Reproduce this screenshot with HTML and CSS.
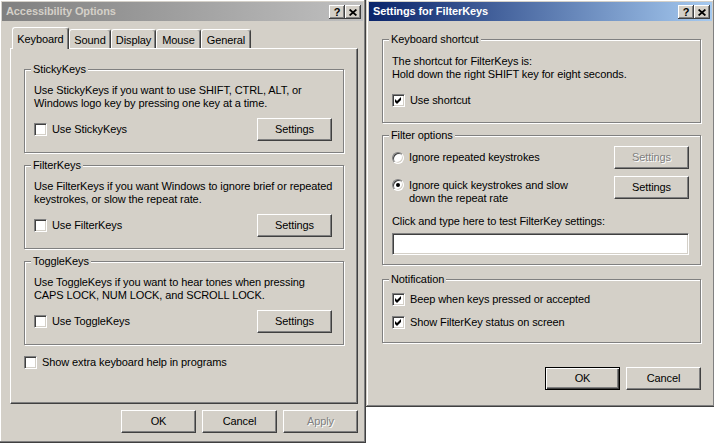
FILE: index.html
```html
<!DOCTYPE html>
<html lang="en">
<head>
    <meta charset="UTF-8">
    <title>Accessibility Options</title>
    <link rel="stylesheet" href="styles.css">
</head>
<body>
    <div class="desktop">
        <div class="window left inactive">
            <div class="titlebar">
                <span class="title">Accessibility Options</span>
                <span class="cap-btn">?</span>
                <span class="cap-btn"><svg width="8" height="7" viewBox="0 0 8 7"><path d="M0.6 0.5 L7.4 6.5 M7.4 0.5 L0.6 6.5" stroke="#000" stroke-width="1.7"/></svg></span>
            </div>

            <div class="tabs">
                <span class="tab active">Keyboard</span>
                <span class="tab">Sound</span>
                <span class="tab">Display</span>
                <span class="tab">Mouse</span>
                <span class="tab">General</span>
            </div>

            <div class="pane">
                <fieldset class="group">
                    <legend>StickyKeys</legend>
                    <div class="text">Use StickyKeys if you want to use SHIFT, CTRL, ALT, or<br>Windows logo key by pressing one key at a time.</div>
                    <div class="row">
                        <label class="opt"><span class="check"></span>Use StickyKeys</label>
                        <span class="btn">Settings</span>
                    </div>
                </fieldset>

                <fieldset class="group">
                    <legend>FilterKeys</legend>
                    <div class="text">Use FilterKeys if you want Windows to ignore brief or repeated<br>keystrokes, or slow the repeat rate.</div>
                    <div class="row">
                        <label class="opt"><span class="check"></span>Use FilterKeys</label>
                        <span class="btn">Settings</span>
                    </div>
                </fieldset>

                <fieldset class="group">
                    <legend>ToggleKeys</legend>
                    <div class="text">Use ToggleKeys if you want to hear tones when pressing<br>CAPS LOCK, NUM LOCK, and SCROLL LOCK.</div>
                    <div class="row">
                        <label class="opt"><span class="check"></span>Use ToggleKeys</label>
                        <span class="btn">Settings</span>
                    </div>
                </fieldset>

                <label class="opt extra"><span class="check"></span>Show extra keyboard help in programs</label>
            </div>

            <div class="buttons">
                <span class="btn">OK</span>
                <span class="btn">Cancel</span>
                <span class="btn disabled">Apply</span>
            </div>
        </div>

        <div class="window right active">
            <div class="titlebar">
                <span class="title">Settings for FilterKeys</span>
                <span class="cap-btn">?</span>
                <span class="cap-btn"><svg width="8" height="7" viewBox="0 0 8 7"><path d="M0.6 0.5 L7.4 6.5 M7.4 0.5 L0.6 6.5" stroke="#000" stroke-width="1.7"/></svg></span>
            </div>

            <div class="body">
                <fieldset class="group shortcut">
                    <legend>Keyboard shortcut</legend>
                    <div class="text">The shortcut for FilterKeys is:<br>Hold down the right SHIFT key for eight seconds.</div>
                    <label class="opt"><span class="check checked"><svg width="7" height="7" viewBox="0 0 7 7"><path d="M0 2 L2 4 L6 0 L6 3 L2 7 L0 5 Z" fill="#000"/></svg></span>Use shortcut</label>
                </fieldset>

                <fieldset class="group filter">
                    <legend>Filter options</legend>
                    <div class="row first">
                        <label class="opt"><span class="radio"></span>Ignore repeated keystrokes</label>
                        <span class="btn disabled">Settings</span>
                    </div>
                    <div class="row second">
                        <label class="opt top"><span class="radio selected"></span><span>Ignore quick keystrokes and slow<br>down the repeat rate</span></label>
                        <span class="btn">Settings</span>
                    </div>
                    <div class="test-label">Click and type here to test FilterKey settings:</div>
                    <div class="field"></div>
                </fieldset>

                <fieldset class="group notify">
                    <legend>Notification</legend>
                    <label class="opt"><span class="check checked"><svg width="7" height="7" viewBox="0 0 7 7"><path d="M0 2 L2 4 L6 0 L6 3 L2 7 L0 5 Z" fill="#000"/></svg></span>Beep when keys pressed or accepted</label>
                    <label class="opt"><span class="check checked"><svg width="7" height="7" viewBox="0 0 7 7"><path d="M0 2 L2 4 L6 0 L6 3 L2 7 L0 5 Z" fill="#000"/></svg></span>Show FilterKey status on screen</label>
                </fieldset>

                <div class="buttons">
                    <span class="btn default">OK</span>
                    <span class="btn">Cancel</span>
                </div>
            </div>
        </div>
    </div>
</body>
</html>
```

FILE: styles.css
```css
html, body {
    margin: 0;
    overflow: hidden;
}
body {
    background-color: #fff;
    font-family: "Liberation Sans", Arial, sans-serif;
    font-size: 11px;
    line-height: 13px;
    letter-spacing: -0.1px;
    color: #000;
}
.desktop {
    display: flex;
    align-items: flex-start;
    margin: -1px 0 0 -1px;
}
.window {
    flex: none;
    box-sizing: border-box;
    padding: 3px;
    background-color: #d4d0c8;
    box-shadow: inset -1px -1px #404040, inset 1px 1px #d4d0c8, inset -2px -2px #808080, inset 2px 2px #fff;
}
.window.left {
    width: 367px;
    height: 444px;
}
.window.right {
    width: 349px;
    height: 408px;
}
.titlebar {
    display: flex;
    align-items: flex-start;
    height: 19px;
    padding: 0 2px 0 4px;
}
.title {
    flex: 1;
    font-weight: bold;
    line-height: 19px;
    color: #fff;
}
.inactive .titlebar {
    background: linear-gradient(90deg, #808080, #c0c0c0);
}
.inactive .title {
    color: #d4d0c8;
}
.active .titlebar {
    background: linear-gradient(90deg, #0a246a, #a6caf0);
}
.cap-btn {
    display: flex;
    align-items: center;
    justify-content: center;
    box-sizing: border-box;
    width: 16px;
    height: 14px;
    margin-top: 3px;
    background-color: #d4d0c8;
    box-shadow: inset -1px -1px #404040, inset 1px 1px #fff, inset -2px -2px #808080;
    font-weight: bold;
    font-size: 11px;
    line-height: 12px;
}

/* tabs */
.tabs {
    display: flex;
    align-items: flex-end;
    height: 21px;
    margin: 6px 0 0 10px;
}
.tab {
    box-sizing: border-box;
    height: 19px;
    padding-top: 4px;
    text-align: center;
    border: 1px solid;
    border-bottom: 0;
    border-color: #fff #404040 #fff #fff;
    border-radius: 3px 3px 0 0;
    box-shadow: inset -1px 0 #808080;
}
.tab:nth-child(1) { width: 57px; }
.tab:nth-child(2) { width: 42px; }
.tab:nth-child(3) { width: 45px; }
.tab:nth-child(4) { width: 45px; }
.tab:nth-child(5) { width: 50px; }
.tab.active {
    position: relative;
    z-index: 1;
    height: 22px;
    margin-bottom: -1px;
    padding-top: 5px;
    background-color: #d4d0c8;
}
.pane {
    box-sizing: border-box;
    width: 348px;
    height: 356px;
    margin-left: 8px;
    padding: 14px 13px 0;
    border: 1px solid;
    border-color: #fff #404040 #404040 #fff;
    box-shadow: inset -1px -1px #808080;
}

/* group boxes */
.group {
    min-width: 0;
    margin: 0 0 6px;
    padding: 8px 11px 11px 9px;
    border: 1px solid #808080;
    box-shadow: inset 1px 1px #fff, 1px 1px #fff;
}
.group legend {
    margin-left: -3px;
    padding: 0 2px;
    line-height: 13px;
    background-color: #d4d0c8;
}
.pane .group:nth-of-type(3) {
    margin-bottom: 11px;
}
.text {
    white-space: nowrap;
}
.row {
    display: flex;
    align-items: center;
    justify-content: space-between;
    margin-top: 8px;
}
.opt {
    display: flex;
    align-items: center;
    gap: 5px;
    line-height: 13px;
    white-space: nowrap;
}
.opt.top {
    align-items: flex-start;
    margin-top: 3px;
}

/* controls */
.check {
    display: flex;
    align-items: center;
    justify-content: center;
    box-sizing: border-box;
    width: 13px;
    height: 13px;
    background-color: #fff;
    border: 1px solid;
    border-color: #808080 #fff #fff #808080;
    box-shadow: inset 1px 1px #404040, inset -1px -1px #d4d0c8;
}
.radio {
    position: relative;
    box-sizing: border-box;
    width: 12px;
    height: 12px;
    border-radius: 50%;
    background-color: #fff;
    border: 1px solid;
    border-color: #808080 #fff #fff #808080;
    box-shadow: inset 1px 1px #404040, inset -1px -1px #d4d0c8;
}
.radio.selected::after {
    content: "";
    position: absolute;
    left: 3px;
    top: 3px;
    width: 4px;
    height: 4px;
    border-radius: 50%;
    background-color: #000;
}
.btn {
    box-sizing: border-box;
    width: 75px;
    height: 23px;
    line-height: 21px;
    text-align: center;
    background-color: #d4d0c8;
    border: 1px solid;
    border-color: #fff #404040 #404040 #fff;
    box-shadow: inset -1px -1px #808080;
}
.btn.default {
    border-color: #000;
    box-shadow: inset 1px 1px #fff, inset -1px -1px #404040, inset -2px -2px #808080;
}
.btn.disabled {
    color: #808080;
    text-shadow: 1px 1px #fff;
}
.buttons {
    display: flex;
    justify-content: flex-end;
    gap: 6px;
}
.left .buttons {
    width: 348px;
    margin: 6px 0 0 8px;
}

/* filterkeys dialog */
.right .body {
    padding: 0 11px 0 13px;
}
.shortcut {
    margin-top: 12px;
    padding-top: 9px;
    padding-bottom: 15px;
}
.shortcut .opt {
    margin-top: 13px;
}
.filter {
    padding-top: 4px;
    padding-bottom: 9px;
}
.filter .row.first {
    margin-top: 0;
}
.filter .row.second {
    align-items: flex-start;
    margin-top: 7px;
}
.test-label {
    margin-top: 10px;
}
.field {
    box-sizing: border-box;
    height: 22px;
    margin-top: 5px;
    background-color: #fff;
    border: 1px solid;
    border-color: #808080 #fff #fff #808080;
    box-shadow: inset 1px 1px #404040, inset -1px -1px #d4d0c8;
}
.notify {
    margin-top: 8px;
    padding-top: 7px;
    padding-bottom: 13px;
}
.notify .opt + .opt {
    margin-top: 10px;
}
.right .buttons {
    margin-top: 24px;
}
```
